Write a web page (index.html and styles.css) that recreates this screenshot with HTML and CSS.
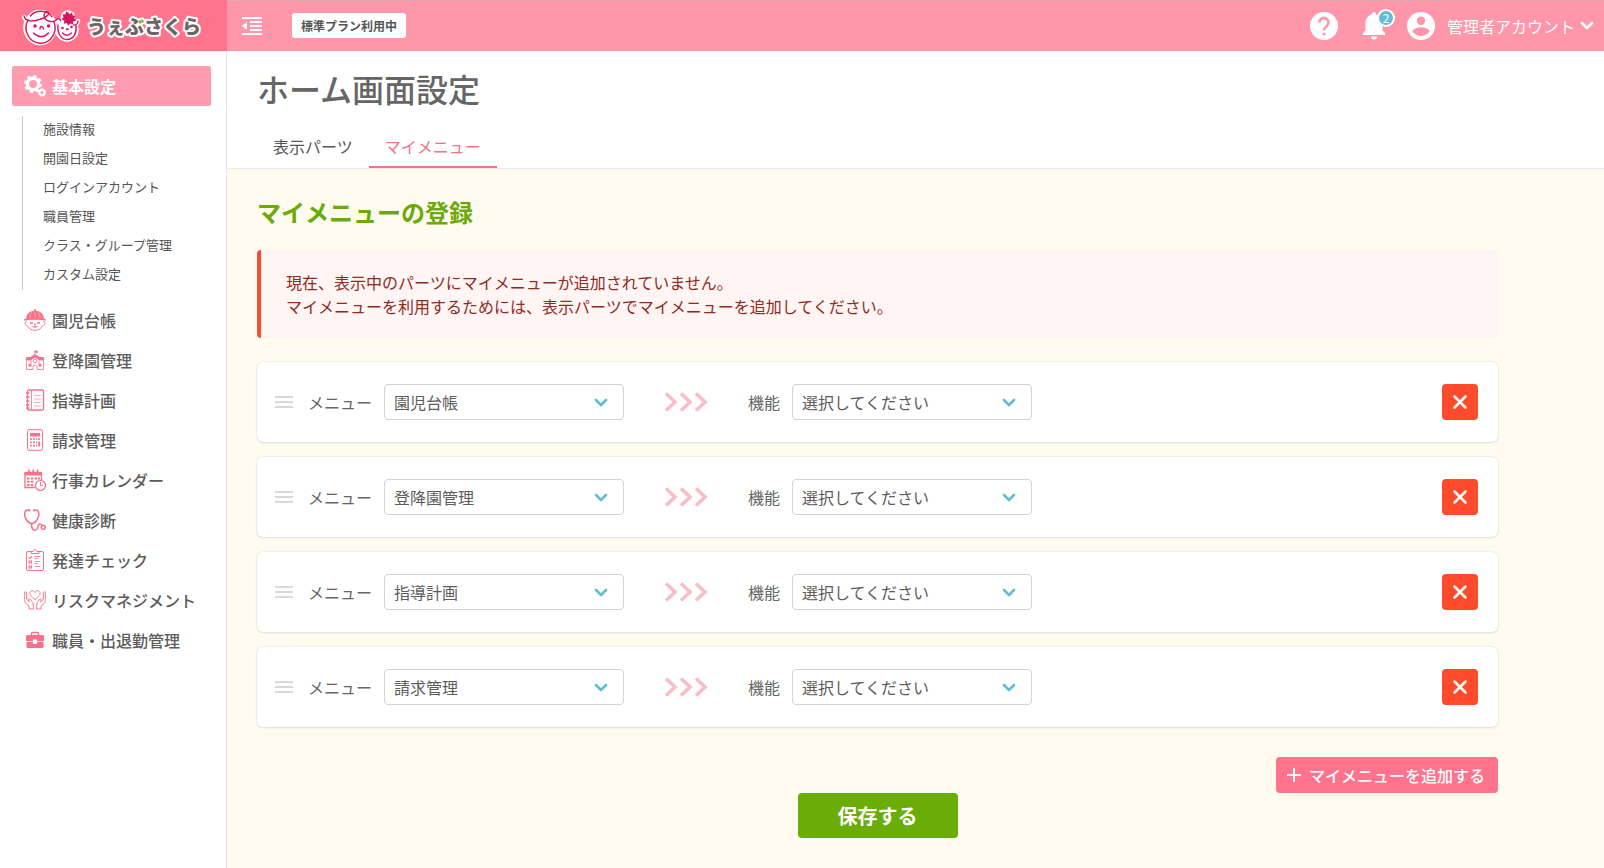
FILE: index.html
```html
<!DOCTYPE html>
<html lang="ja">
<head>
<meta charset="utf-8">
<meta name="viewport" content="width=device-width, initial-scale=1">
<title>ホーム画面設定 | うぇぶさくら</title>
<link rel="stylesheet" href="styles.css">
</head>
<body>
<svg class="sprite" aria-hidden="true">
  <symbol id="chevron" viewBox="0 0 14 10"><path d="M2 2l5 5 5-5" fill="none" stroke="currentColor" stroke-width="2.700" stroke-linecap="round" stroke-linejoin="round"/></symbol>
  <symbol id="grip" viewBox="0 0 18 14"><path d="M0 2h18M0 7h18M0 12h18" stroke="currentColor" stroke-width="1.6"/></symbol>
  <symbol id="arrows" viewBox="0 0 44 20"><path d="M2 1.500l9 8.500-9 8.500M17 1.500l9 8.500-9 8.500M32 1.500l9 8.500-9 8.500" fill="none" stroke="currentColor" stroke-width="3.600"/></symbol>
  <symbol id="cross" viewBox="0 0 16 16"><path d="M2.500 2.500l11 11M13.500 2.500l-11 11" stroke="currentColor" stroke-width="2.500" stroke-linecap="round"/></symbol>
</svg>

<header class="topbar">
  <a class="logo" href="#" aria-label="うぇぶさくら">
    <svg width="60" height="42" viewBox="0 0 60 42" aria-hidden="true">
      <g stroke="#fff" stroke-width="4.500" fill="#fff" stroke-linejoin="round" stroke-linecap="round">
        <ellipse cx="19" cy="22.500" rx="14.500" ry="15.500"/><circle cx="46" cy="25" r="9.500"/><path d="M3 12q2 5 9 4M33 17q4 1 6-2M52 20q4 0 5-4"/><circle cx="47" cy="12.500" r="5"/>
      </g>
      <g fill="none" stroke="#d9145f" stroke-width="1.400" stroke-linecap="round" stroke-linejoin="round">
        <path d="M3 11c1.500 6 9 6 17 3 6-2 9-5 7-7-2-1.500-5 2-3.500 5.500 2 4.500 9 5.500 12.500 2 2-2 3-.5 3.500 1"/>
        <path d="M7 15a14.500 15.500 0 1 0 26 2M9.500 11C14 5 26 4 31 12"/>
        <path d="M37 20c-1 8 3 14.500 9 14.500 7 0 10-7 9-14M52.500 20c3 .5 4.500-1.500 4.500-4"/>
        <path d="M12.500 28q8 7.500 15 0M19 24q0-3 1.800-2.500T22.500 24M41.500 28q4 4.500 9 0M45.500 24.500q1.500-1.500 1.500 0"/>
      </g>
      <g fill="#d9145f"><circle cx="14" cy="21" r="1.700"/><circle cx="27.500" cy="21" r="1.700"/><circle cx="41.500" cy="23" r="1.300"/><circle cx="50.500" cy="22" r="1.300"/>
        <path d="M47 7l1.500 2.200L51 7.500l.8 3 2.700.3-1.200 2.700 1.700 2-3 1 .3 3-3-1-2 2.200-1.500-2.700-3 .7.500-3-2.800-1.500 2-2-1-2.700 3-.2.500-3 2 1.200z"/></g>
    </svg>
    <svg class="wordmark" width="124" height="36" viewBox="0 0 124 36" aria-hidden="true">
      <defs><linearGradient id="leaf" gradientUnits="userSpaceOnUse" x1="54" y1="14" x2="58" y2="10"><stop offset=".5" stop-color="#6f6464"/><stop offset=".5" stop-color="#68b02a"/></linearGradient></defs>
      <text x="6" y="26">うぇ<tspan fill="url(#leaf)">ぶ</tspan>さくら</text>
    </svg>
  </a>
  <div class="bar">
    <button class="icon-btn toggle" type="button" aria-label="メニューを閉じる">
      <svg width="20" height="18" viewBox="0 0 20 18"><path d="M0 1h20M8 5h12M8 9h12M8 13h12M0 17h20" stroke="#fff" stroke-width="1.800"/><path d="M0 9l5-4v8z" fill="#fff"/></svg>
    </button>
    <span class="plan">標準プラン利用中</span>
    <div class="tools">
      <button class="icon-btn" type="button" aria-label="ヘルプ">
        <svg width="28" height="28" viewBox="0 0 28 28"><circle cx="14" cy="14" r="14" fill="#fff"/><path d="M9.500 10.500a4.500 4.500 0 1 1 7.500 3.300c-1.800 1.500-2.900 2.200-2.900 4.400" fill="none" stroke="#ff96a9" stroke-width="2.600"/><circle cx="14.100" cy="22" r="1.600" fill="#ff96a9"/></svg>
      </button>
      <button class="icon-btn bell" type="button" aria-label="お知らせ 2件">
        <svg width="24" height="28" viewBox="0 0 24 28"><path d="M12 0c1.500 0 2.200 1 2.200 2.500 4 1 6.300 4.500 6.300 8.500v7.500l2.500 2.500v2H1v-2l2.500-2.500V11c0-4 2.300-7.500 6.300-8.500C9.800 1 10.500 0 12 0zM9 24.500h6a3 3 0 0 1-6 0z" fill="#fff"/></svg>
        <span class="count">2</span>
      </button>
      <button class="account" type="button">
        <svg width="28" height="28" viewBox="0 0 28 28"><circle cx="14" cy="14" r="14" fill="#fff"/><circle cx="14" cy="8.800" r="4.200" fill="#ff96a9"/><path d="M5.500 19.500c0-2.900 5.700-4.300 8.500-4.300s8.500 1.400 8.500 4.300a10.200 10.200 0 0 1-17 0z" fill="#ff96a9"/></svg>
        <span>管理者アカウント</span>
        <svg width="14" height="10"><use href="#chevron"/></svg>
      </button>
    </div>
  </div>
</header>

<div class="shell">
  <nav class="sidebar" aria-label="メインメニュー">
    <a class="item active" href="#">
      <svg class="ico" viewBox="0 0 22 22"><circle cx="9" cy="9" r="5.700" fill="none" stroke="#fff" stroke-width="3.400"/><circle cx="9" cy="9" r="8" fill="none" stroke="#fff" stroke-width="2" stroke-dasharray="3.300 2.983"/><circle cx="18" cy="17.500" r="2.500" fill="none" stroke="#fff" stroke-width="2"/><circle cx="18" cy="17.500" r="3.700" fill="none" stroke="#fff" stroke-width="1" stroke-dasharray="1.900 1"/></svg>
      基本設定
    </a>
    <ul class="sub">
      <li><a href="#">施設情報</a></li>
      <li><a href="#">開園日設定</a></li>
      <li><a href="#">ログインアカウント</a></li>
      <li><a href="#">職員管理</a></li>
      <li><a href="#">クラス・グループ管理</a></li>
      <li><a href="#">カスタム設定</a></li>
    </ul>
    <a class="item" href="#">
      <svg class="ico" viewBox="0 0 22 22"><path d="M2 10.500C2 5 6 1.800 11 1.800S20 5 20 10.500z" fill="currentColor"/><path d="M10 1a1 1 0 0 1 2 0v1h-2z" fill="currentColor"/><path d="M11 2v8M8 2.500C6.500 5 6 7 6 10M14 2.500C15.500 5 16 7 16 10" stroke="#ffb6c2" fill="none" stroke-width=".7"/><path d="M0 11q11-2.500 22 0" fill="none" stroke="currentColor" stroke-width="1.300"/><path d="M3 12.500c-3 0-2.500 4.500.5 4.300C5 20 8 21.300 11 21.300s6-1.300 7.500-4.500c3 .2 3.500-4.300.5-4.300" fill="none" stroke="currentColor" stroke-width=".9"/><path d="M8 17.200q3 3 6 0z" fill="currentColor"/><path d="M6 14h3M13 14h3M10 15.500h2" stroke="currentColor" stroke-width="1.600"/></svg>
      園児台帳
    </a>
    <a class="item" href="#">
      <svg class="ico" viewBox="0 0 22 22"><path d="M11 5V1.500M11 2h2.500v1.500H11z" fill="currentColor" stroke="currentColor" stroke-width=".8"/><path d="M11 5l4.500 3h4l1 3.500h-5L11 8.500l-4.500 3h-5l1-3.500h4z" fill="currentColor"/><path d="M2.500 12v8.500H9v-3.500q2-2 4 0v3.500h6.500V12M7 11.500V15M15 11.500V15" fill="none" stroke="currentColor" stroke-width=".8"/><circle cx="11" cy="12" r="1.800" fill="#fff" stroke="currentColor" stroke-width=".9"/><path d="M4.500 15h3v2.500h-3zM14.500 15h3v2.500h-3z" fill="currentColor"/></svg>
      登降園管理
    </a>
    <a class="item" href="#">
      <svg class="ico" viewBox="0 0 22 22"><rect x="3.500" y="1" width="16" height="20" rx="1.500" fill="none" stroke="currentColor" stroke-width="1.300"/><path d="M7.500 1v20" stroke="currentColor" stroke-width=".8"/><path d="M2 4h3.500M2 8h3.500M2 12h3.500M2 16h3.500M2 19h3.500" stroke="currentColor" stroke-width="1.300"/><path d="M10 6.500h7M10 10h7M10 13.500h7M10 17h7" stroke="currentColor" stroke-width=".6"/></svg>
      指導計画
    </a>
    <a class="item" href="#">
      <svg class="ico" viewBox="0 0 22 22"><rect x="3.500" y=".7" width="15" height="20.600" rx="1.500" fill="none" stroke="currentColor"/><path d="M6 4h10v3.500H6z" fill="currentColor"/><path d="M6 10.200h1.800M9 10.200h1.800M12 10.200h1.200M14.200 10.200H16M6 13.300h1.800M9 13.300h1.800M12 13.300h1.200M6 16.700h1.800M9 16.700h1.800M12 16.700h1.200" stroke="currentColor" stroke-width="1.800"/><path d="M14.200 12.400H16v5.200h-1.800z" fill="currentColor"/></svg>
      請求管理
    </a>
    <a class="item" href="#">
      <svg class="ico" viewBox="0 0 22 22"><path d="M1 3.500h16.500V12M11 18.500H1v-15" fill="none" stroke="currentColor" stroke-width="1.300"/><path d="M.5 3h17.500v3.500H.5z" fill="currentColor"/><path d="M5 .5V5M9.200 .5V5M13.500 .5V5" stroke="currentColor" stroke-width="1.600"/><path d="M3 9.500h2.500M6.800 9.500h2.500M10.600 9.500h2.500M14 9.500h2M3 12.700h2.500M6.800 12.700h2.500M3 16h2.500M6.800 16h2.500" stroke="currentColor" stroke-width="2"/><circle cx="16.500" cy="16.500" r="5" fill="#fff" stroke="currentColor" stroke-width="1.200"/><path d="M16.500 13v3.700H19" fill="none" stroke="currentColor"/></svg>
      行事カレンダー
    </a>
    <a class="item" href="#">
      <svg class="ico" viewBox="0 0 22 22"><g fill="none" stroke="currentColor" stroke-width="1.500" stroke-linecap="round"><path d="M5 1.200H2.500C0 3 .5 7 2 10c1.500 2.500 3 4.500 5.800 4.500S12 12.500 13.500 10c1.500-3 2-7-.5-8.800h-2.500"/><path d="M7.800 14.500C6.800 23 13.500 22.500 13.800 18c.2-3.500 3-4 4-1.500"/><circle cx="19.300" cy="18.200" r="2"/></g><path d="M5.500 0v2.500M10 0v2.500" stroke="currentColor" stroke-width="1.500"/></svg>
      健康診断
    </a>
    <a class="item" href="#">
      <svg class="ico" viewBox="0 0 22 22"><rect x="2.500" y="2.500" width="17" height="19" rx="1.500" fill="none" stroke="currentColor"/><path d="M7 2.500h2c0-2.500 4-2.500 4 0h2v2H7z" fill="#fff" stroke="currentColor"/><path d="M5 8.500l1 1 2-2.500M5 12h2.500v2H5zM5 17h2.500v2H5z" fill="none" stroke="currentColor" stroke-width="1.100"/><path d="M10.500 7.500h6M10.500 9.500h4M10.500 12.500h6M10.500 14.500h3M10.500 17.500h6" stroke="currentColor" stroke-width=".8"/></svg>
      発達チェック
    </a>
    <a class="item" href="#">
      <svg class="ico" viewBox="0 0 22 22"><g fill="none" stroke="currentColor" stroke-width=".95" stroke-linejoin="round"><path d="M11 10.500C7 7.500 5.500 5.500 6 3.500c.7-2.500 4-2.200 5 0 1-2.200 4.300-2.500 5 0 .5 2-1 4-5 7z"/><path d="M.6 3c1-.8 2 0 2 1v6l3 3c-2-3-.5-4 1-2.500l2 3c.8 1.500.8 3 .8 6.500H5v-3L1 13.500C.6 12 .6 7 .6 3zM21.400 3c-1-.8-2 0-2 1v6l-3 3c2-3 .5-4-1-2.500l-2 3c-.8 1.500-.8 3-.8 6.500H17v-3l4-3.500c.4-1.500.4-6.500.4-10.500z"/></g></svg>
      リスクマネジメント
    </a>
    <a class="item" href="#">
      <svg class="ico" viewBox="0 0 22 22"><path d="M7.500 6V4.500q0-1 1-1h5q1 0 1 1V6" fill="none" stroke="currentColor" stroke-width="1.500"/><path d="M3.500 6h15q1.500 0 1.500 1.500V12h-7v-1.500H9V12H2V7.500Q2 6 3.500 6zM2.500 12.800H9V15h4v-2.200h6.500v4.700q0 1.500-1.500 1.500H4q-1.500 0-1.500-1.500z" fill="currentColor"/></svg>
      職員・出退勤管理
    </a>
  </nav>

  <main class="main">
    <div class="page-head">
      <h1>ホーム画面設定</h1>
      <nav class="tabs" aria-label="設定タブ">
        <a class="tab" href="#">表示パーツ</a>
        <a class="tab current" href="#" aria-current="page">マイメニュー</a>
      </nav>
    </div>
    <form class="content">
      <h2>マイメニューの登録</h2>
      <p class="alert">現在、表示中のパーツにマイメニューが追加されていません。<br>マイメニューを利用するためには、表示パーツでマイメニューを追加してください。</p>
      <div class="rows">
        <div class="row">
          <svg class="grip"><use href="#grip"/></svg>
          <label for="menu1">メニュー</label>
          <span class="select"><select id="menu1"><option>園児台帳</option></select><svg><use href="#chevron"/></svg></span>
          <svg class="arrows"><use href="#arrows"/></svg>
          <label for="func1">機能</label>
          <span class="select"><select id="func1"><option>選択してください</option></select><svg><use href="#chevron"/></svg></span>
          <button class="remove" type="button" aria-label="削除"><svg><use href="#cross"/></svg></button>
        </div>
        <div class="row">
          <svg class="grip"><use href="#grip"/></svg>
          <label for="menu2">メニュー</label>
          <span class="select"><select id="menu2"><option>登降園管理</option></select><svg><use href="#chevron"/></svg></span>
          <svg class="arrows"><use href="#arrows"/></svg>
          <label for="func2">機能</label>
          <span class="select"><select id="func2"><option>選択してください</option></select><svg><use href="#chevron"/></svg></span>
          <button class="remove" type="button" aria-label="削除"><svg><use href="#cross"/></svg></button>
        </div>
        <div class="row">
          <svg class="grip"><use href="#grip"/></svg>
          <label for="menu3">メニュー</label>
          <span class="select"><select id="menu3"><option>指導計画</option></select><svg><use href="#chevron"/></svg></span>
          <svg class="arrows"><use href="#arrows"/></svg>
          <label for="func3">機能</label>
          <span class="select"><select id="func3"><option>選択してください</option></select><svg><use href="#chevron"/></svg></span>
          <button class="remove" type="button" aria-label="削除"><svg><use href="#cross"/></svg></button>
        </div>
        <div class="row">
          <svg class="grip"><use href="#grip"/></svg>
          <label for="menu4">メニュー</label>
          <span class="select"><select id="menu4"><option>請求管理</option></select><svg><use href="#chevron"/></svg></span>
          <svg class="arrows"><use href="#arrows"/></svg>
          <label for="func4">機能</label>
          <span class="select"><select id="func4"><option>選択してください</option></select><svg><use href="#chevron"/></svg></span>
          <button class="remove" type="button" aria-label="削除"><svg><use href="#cross"/></svg></button>
        </div>
      </div>
      <div class="actions">
        <button class="add" type="button"><svg width="16" height="16" viewBox="0 0 16 16"><path d="M8 1v14M1 8h14" stroke="#fff" stroke-width="2"/></svg>マイメニューを追加する</button>
        <button class="save" type="submit">保存する</button>
      </div>
    </form>
  </main>
</div>
</body>
</html>
```

FILE: styles.css
```css
* { box-sizing: border-box; }

body {
  margin: 0;
  min-height: 100vh;
  display: flex;
  flex-direction: column;
  color: #666;
  background: #fff;
  font: 16px/24px "Noto Sans CJK JP", "Noto Sans", sans-serif;
}

a { color: inherit; text-decoration: none; }
button, select { font: inherit; color: inherit; }
button { border: 0; padding: 0; cursor: pointer; }
svg { display: block; flex: none; }
.sprite { position: absolute; width: 0; height: 0; }

/* Header */
.topbar { display: flex; height: 51px; color: #fff; }

.logo {
  display: flex;
  align-items: center;
  flex: none;
  width: 227px;
  padding-left: 21px;
  background: #ff738c;
}

.wordmark text {
  font-size: 19px;
  font-weight: 900;
  fill: #6f6464;
  stroke: #fff;
  stroke-width: 4px;
  stroke-linejoin: round;
  paint-order: stroke;
}

.bar {
  display: flex;
  align-items: center;
  flex: 1;
  padding: 0 10px 0 15px;
  background: #ff96a9;
  box-shadow: inset 0 1px #dca6b0;
}

.icon-btn { background: none; }

.plan {
  margin-left: 30px;
  padding: 1px 9px 0;
  border-radius: 3px;
  background: #fff;
  color: #555;
  font-size: 12px;
  font-weight: 700;
}

.tools { display: flex; align-items: center; margin-left: auto; }
.bell { position: relative; margin-left: 24px; }

.count {
  position: absolute;
  top: -3px;
  right: -9px;
  width: 18px;
  height: 18px;
  border: 2px solid #fff;
  border-radius: 50%;
  background: #62bdd4;
  font-size: 12px;
  line-height: 14px;
  text-align: center;
}

.account { display: flex; align-items: center; margin-left: 21px; background: none; }
.account span { margin: 0 5px 0 12px; }

/* Layout */
.shell { display: flex; flex: 1; }

.sidebar {
  flex: none;
  width: 227px;
  padding: 15px 15px 0 12px;
  border-right: 1px solid #e8e8e8;
}

.item {
  display: flex;
  align-items: center;
  gap: 6px;
  height: 40px;
  padding-left: 12px;
  border-radius: 2px;
  font-weight: 500;
  color: #5c5c5c;
}

.ico { width: 22px; height: 22px; color: #f8718a; }
.item.active { background: #ff9caf; color: #fff; font-weight: 700; }

.sub {
  margin: 10px 0 10px 10px;
  padding: 0 0 0 20px;
  border-left: 1px solid #ccc;
  list-style: none;
  font-size: 13px;
  line-height: 26px;
  color: #555;
}

.sub a { display: block; padding-bottom: 3px; }

.main { display: flex; flex-direction: column; flex: 1; min-width: 0; }

.page-head { padding: 13px 30px 0; border-bottom: 1px solid #e8e8e8; }

h1 { margin: 0; font-size: 32px; line-height: 48px; font-weight: 500; }

.tabs { display: flex; margin-top: 14px; }
.tab { padding: 8px 16px; border-bottom: 2px solid transparent; color: #555; }
.tab.current { border-color: #ee7489; color: #ee7489; }

.content { flex: 1; padding: 25px 106px 30px 30px; background: #fffbee; }

h2 { margin: 0 0 20px; font-size: 24px; line-height: 36px; font-weight: 700; color: #6aab0a; }

.alert {
  margin: 0 0 24px;
  padding: 20px 25px;
  border-left: 4px solid #f4502f;
  border-radius: 4px;
  background: #fff5f5;
  color: #912b1b;
}

.rows { display: grid; gap: 15px; }

.row {
  display: flex;
  align-items: center;
  height: 80px;
  padding: 0 20px 0 18px;
  border-radius: 6px;
  background: #fff;
  box-shadow: 0 0 2px rgba(0, 0, 0, .15), 0 1px 2px rgba(0, 0, 0, .08);
}

.grip { width: 18px; height: 14px; margin-right: 15px; color: #ccc; }

.select { position: relative; width: 240px; margin-left: 12px; }

.select select {
  appearance: none;
  display: block;
  width: 100%;
  height: 36px;
  padding: 0 40px 0 9px;
  border: 1px solid #d2d2d2;
  border-radius: 4px;
  background: #fff;
  color: #5c5c5c;
}

.select svg {
  position: absolute;
  top: 14px;
  right: 16px;
  width: 14px;
  height: 10px;
  color: #62bdd4;
  pointer-events: none;
}

.arrows { width: 44px; height: 20px; margin: 0 40px; color: #f8bdc9; }

.remove {
  display: grid;
  place-items: center;
  width: 36px;
  height: 36px;
  margin-left: auto;
  border-radius: 4px;
  background: #ff4b2b;
  color: #fff;
}

.remove svg { width: 16px; height: 16px; }

.actions { display: flex; flex-direction: column; align-items: center; margin-top: 30px; }

.add {
  display: flex;
  align-items: center;
  align-self: flex-end;
  gap: 7px;
  height: 36px;
  padding: 0 13px 0 10px;
  border-radius: 4px;
  background: #ff738c;
  color: #fff;
  font-weight: 500;
}

.save {
  width: 160px;
  height: 45px;
  border-radius: 4px;
  background: #6aad07;
  color: #fff;
  font-size: 20px;
  font-weight: 700;
}
```
